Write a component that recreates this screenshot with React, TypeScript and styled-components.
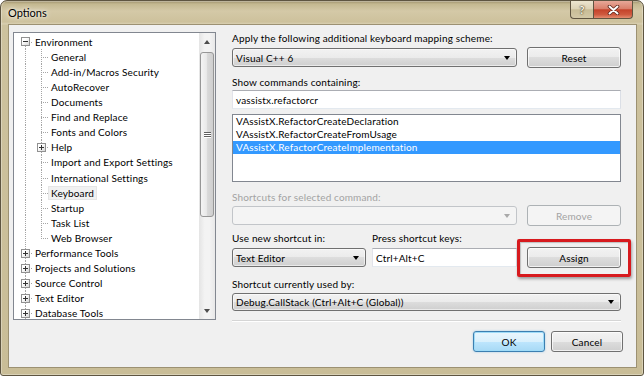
import React from 'react';
import styled, { createGlobalStyle, css } from 'styled-components';

const GlobalStyle = createGlobalStyle`
  html, body {
    margin: 0;
    padding: 0;
    background: #fff;
  }
  body {
    font-family: Lato, "Liberation Sans", sans-serif;
    font-size: 10px;
    letter-spacing: 0.15px;
    color: #000;
  }
  * {
    box-sizing: border-box;
  }
`;

const Window = styled.div`
  width: 644px;
  height: 376px;
  display: flex;
  flex-direction: column;
  padding: 0 6px 7px 7px;
  border: 1px solid #5e5541;
  border-radius: 7px 7px 3px 3px;
  background: linear-gradient(180deg, #9c8f6a 0, #c4b890 3px, #d4c9a7 10px, #cdc19c 21px, #d9d0b2 23px, #cdc29e 24px, #c9bd97 100%);
  box-shadow: inset 0 0 0 1px rgba(255, 255, 255, 0.3);
`;

const TitleBar = styled.div`
  height: 23px;
  display: flex;
  align-items: flex-start;
`;

const Title = styled.div`
  line-height: 24px;
  font-size: 11px;
  letter-spacing: 0;
  text-shadow: 0 0 6px #fff, 0 0 3px rgba(255, 255, 255, 0.8);
`;

const CaptionButtons = styled.div`
  margin-left: auto;
  margin-right: 4px;
  display: flex;
`;

const CaptionButton = styled.div<{ $close?: boolean }>`
  height: 18px;
  display: flex;
  align-items: center;
  justify-content: center;
  border: 1px solid #5f5440;
  border-top: none;
  ${p => p.$close ? css`
    width: 40px;
    border-radius: 0 0 4px 0;
    background: linear-gradient(180deg, #e7a898 0%, #d9806b 45%, #c4432b 52%, #cf5a3f 80%, #e48d70 100%);
  ` : css`
    width: 23px;
    border-right: none;
    border-radius: 0 0 0 4px;
    background: linear-gradient(180deg, #ece5cf 0%, #ddd3b6 45%, #c8bc96 52%, #d3c8a6 100%);
    color: #fbf6e4;
    font-weight: 700;
    font-size: 11px;
    text-shadow: 0 0 2px #3d3422, 0 0 1px #3d3422;
  `}
`;

const Client = styled.div`
  flex: 1;
  display: flex;
  flex-direction: column;
  background: #f0f0f0;
  border: 1px solid #9c9172;
  padding: 7px 0 0 4px;
`;

const MainRow = styled.div`
  height: 290px;
  margin-right: 15px;
  display: flex;
  gap: 16px;
`;

const Tree = styled.div`
  width: 203px;
  height: 288px;
  display: flex;
  border: 1px solid #828790;
  background: #fff;
`;

const TreeList = styled.div`
  flex: 1;
  padding: 1.2px 0 0 3px;
  overflow: hidden;
`;

const TreeRow = styled.div`
  height: 15.1px;
  display: flex;
  align-items: center;
  white-space: nowrap;
`;

const dotsV = 'repeating-linear-gradient(to bottom, #a5a5a5 0 1px, transparent 1px 2px)';
const dotsH = 'repeating-linear-gradient(to right, #a5a5a5 0 1px, transparent 1px 2px)';

const Guide = styled.div<{ $line?: boolean }>`
  width: 16px;
  align-self: stretch;
  position: relative;
  ${p => p.$line && css`
    &::before {
      content: '';
      position: absolute;
      left: 8px;
      top: 0;
      bottom: 0;
      width: 1px;
      background: ${dotsV};
    }
  `}
`;

const Branch = styled.div<{ $top: boolean; $bottom: boolean }>`
  width: 16px;
  align-self: stretch;
  position: relative;
  &::before {
    content: '';
    position: absolute;
    left: 8px;
    width: 1px;
    top: ${p => (p.$top ? '0' : '50%')};
    bottom: ${p => (p.$bottom ? '0' : '50%')};
    background: ${dotsV};
  }
  &::after {
    content: '';
    position: absolute;
    left: 8px;
    right: 0;
    top: 50%;
    height: 1px;
    background: ${dotsH};
  }
`;

const Expander = styled.span<{ $open: boolean }>`
  position: absolute;
  left: 4px;
  top: 50%;
  margin-top: -4.5px;
  width: 9px;
  height: 9px;
  border: 1px solid #919191;
  background: linear-gradient(135deg, #fff 35%, #d6d6d6);
  z-index: 1;
  &::before {
    content: '';
    position: absolute;
    left: 1px;
    width: 5px;
    top: 3px;
    height: 1px;
    background: #333;
  }
  ${p => !p.$open && css`
    &::after {
      content: '';
      position: absolute;
      left: 3px;
      width: 1px;
      top: 1px;
      height: 5px;
      background: #333;
    }
  `}
`;

const TreeText = styled.span<{ $selected?: boolean }>`
  padding: 0 2px;
  line-height: 12px;
  ${p => p.$selected && css`
    background: #f1f1f1;
    outline: 1px solid #e6e6e6;
  `}
`;

const ScrollBar = styled.div`
  width: 16px;
  display: flex;
  flex-direction: column;
  background: linear-gradient(90deg, #e4e4e4, #f3f3f3 35%, #f3f3f3 65%, #e8e8e8);
`;

const ScrollArrow = styled.div<{ $down?: boolean }>`
  height: 17px;
  display: flex;
  align-items: center;
  justify-content: center;
  &::before {
    content: '';
    border-left: 3.5px solid transparent;
    border-right: 3.5px solid transparent;
    ${p => p.$down ? css`border-top: 4px solid #4d4d4d;` : css`border-bottom: 4px solid #4d4d4d;`}
  }
`;

const ScrollTrack = styled.div`
  flex: 1;
  padding: 2px 1px 0 1px;
`;

const Thumb = styled.div`
  height: 165px;
  border: 1px solid #969696;
  border-radius: 3px;
  background: linear-gradient(90deg, #f4f4f4, #e9e9e9 45%, #d8d8d8 55%, #cfcfcf);
  display: flex;
  align-items: center;
  justify-content: center;
`;

const Grip = styled.div`
  width: 7px;
  height: 6px;
  background: repeating-linear-gradient(to bottom, #5f5f5f 0 1px, #fff 1px 2px);
`;

const Panel = styled.div`
  flex: 1;
  display: flex;
  flex-direction: column;
`;

const Label = styled.div<{ $mt?: number; $disabled?: boolean }>`
  height: 13px;
  line-height: 13px;
  margin-top: ${p => p.$mt ?? 0}px;
  color: ${p => (p.$disabled ? '#a3a3a3' : '#000')};
  white-space: nowrap;
`;

const Row = styled.div<{ $mt?: number }>`
  height: 21px;
  margin-top: ${p => p.$mt ?? 0}px;
  display: grid;
  grid-template-columns: 1fr 94px;
  column-gap: 10px;
  align-items: center;
`;

const Combo = styled.div<{ $disabled?: boolean; $mt?: number; $h?: number }>`
  height: ${p => p.$h ?? 19}px;
  margin-top: ${p => p.$mt ?? 0}px;
  display: flex;
  align-items: center;
  padding-left: 3px;
  border: 1px solid #707070;
  border-radius: 3px;
  background: linear-gradient(180deg, #f2f2f2 0%, #ebebeb 50%, #dddddd 50%, #cfcfcf 100%);
  box-shadow: inset 0 0 0 1px rgba(255, 255, 255, 0.55);
  white-space: nowrap;
  &::after {
    content: '';
    margin-left: auto;
    margin-right: 6px;
    border-left: 3.5px solid transparent;
    border-right: 3.5px solid transparent;
    border-top: 4px solid #000;
  }
  ${p => p.$disabled && css`
    border-color: #c2c5c9;
    background: #f4f4f4;
    box-shadow: none;
    &::after {
      border-top-color: #a9a9a9;
    }
  `}
`;

const TextBox = styled.div<{ $mt?: number }>`
  height: 19px;
  margin-top: ${p => p.$mt ?? 0}px;
  display: flex;
  align-items: center;
  padding-left: 3px;
  border: 1px solid;
  border-color: #abadb3 #dbdfe6 #e3e9ef #e2e3ea;
  background: #fff;
  white-space: nowrap;
`;

const ListBox = styled.div`
  height: 68px;
  margin-top: 5px;
  border: 1px solid #828790;
  background: #fff;
`;

const ListItem = styled.div<{ $selected?: boolean }>`
  height: 13px;
  line-height: 13px;
  padding-left: 3px;
  white-space: nowrap;
  ${p => p.$selected && css`
    background: #3399ff;
    color: #fff;
  `}
`;

const Button = styled.button<{ $variant?: 'default' | 'disabled'; $w?: number }>`
  width: ${p => p.$w ?? 94}px;
  height: 21px;
  padding: 0;
  font: inherit;
  letter-spacing: inherit;
  color: #000;
  border: 1px solid #707070;
  border-radius: 3px;
  background: linear-gradient(180deg, #f2f2f2 0%, #ebebeb 50%, #dddddd 50%, #cfcfcf 100%);
  box-shadow: inset 0 0 0 1px rgba(255, 255, 255, 0.7);
  ${p => p.$variant === 'default' && css`
    border-color: #3c7fb1;
    background: linear-gradient(180deg, #eaf6fd 0%, #d9f0fc 50%, #bee6fd 50%, #a7d9f5 100%);
    box-shadow: inset 0 0 0 1px #9fdcf8, 0 0 2px rgba(60, 160, 220, 0.5);
  `}
  ${p => p.$variant === 'disabled' && css`
    color: #a3a3a3;
    border-color: #adb2b5;
    background: #f4f4f4;
    box-shadow: none;
  `}
`;

const KeysGrid = styled.div`
  margin-top: 6px;
  display: grid;
  grid-template-columns: 134px 1fr 98px;
  grid-template-rows: 13px 21px;
  column-gap: 6px;
  row-gap: 2px;
  align-items: center;
`;

const AssignCell = styled.div`
  justify-self: end;
  position: relative;
  display: flex;
`;

const Highlight = styled.div`
  position: absolute;
  left: -10px;
  right: -10px;
  top: -8px;
  bottom: -9px;
  border: 3px solid #d71a1e;
  border-radius: 2px;
  box-shadow: 1px 2px 3px rgba(0, 0, 0, 0.35), inset 1px 1px 1px rgba(0, 0, 0, 0.2);
  pointer-events: none;
`;

const Separator = styled.div`
  margin-top: auto;
  height: 2px;
  border-top: 1px solid #d5d5d5;
  border-bottom: 1px solid #fff;
`;

const Footer = styled.div`
  margin-top: 9px;
  padding-right: 13px;
  display: flex;
  justify-content: flex-end;
  gap: 6px;
`;

type TreeItem = { label: string; level: number; exp?: '+' | '-'; last?: boolean; selected?: boolean };

const treeItems: TreeItem[] = [
  { label: 'Environment', level: 0, exp: '-' },
  { label: 'General', level: 1 },
  { label: 'Add-in/Macros Security', level: 1 },
  { label: 'AutoRecover', level: 1 },
  { label: 'Documents', level: 1 },
  { label: 'Find and Replace', level: 1 },
  { label: 'Fonts and Colors', level: 1 },
  { label: 'Help', level: 1, exp: '+' },
  { label: 'Import and Export Settings', level: 1 },
  { label: 'International Settings', level: 1 },
  { label: 'Keyboard', level: 1, selected: true },
  { label: 'Startup', level: 1 },
  { label: 'Task List', level: 1 },
  { label: 'Web Browser', level: 1, last: true },
  { label: 'Performance Tools', level: 0, exp: '+' },
  { label: 'Projects and Solutions', level: 0, exp: '+' },
  { label: 'Source Control', level: 0, exp: '+' },
  { label: 'Text Editor', level: 0, exp: '+' },
  { label: 'Database Tools', level: 0, exp: '+' },
];

function CloseGlyph() {
  return (
    <svg width="13" height="10" viewBox="0 0 13 10">
      <path d="M2.5 1.5 L10.5 8.5 M10.5 1.5 L2.5 8.5" stroke="#5a2418" strokeWidth="3.6" strokeLinecap="round" />
      <path d="M2.5 1.5 L10.5 8.5 M10.5 1.5 L2.5 8.5" stroke="#fff" strokeWidth="2" strokeLinecap="round" />
    </svg>
  );
}

function OptionsTree() {
  return (
    <Tree>
      <TreeList>
        {treeItems.map((item, i) => (
          <TreeRow key={item.label}>
            {item.level > 0 && <Guide $line />}
            <Branch $top={i > 0} $bottom={!item.last}>
              {item.exp && <Expander $open={item.exp === '-'} />}
            </Branch>
            <TreeText $selected={item.selected}>{item.label}</TreeText>
          </TreeRow>
        ))}
      </TreeList>
      <ScrollBar>
        <ScrollArrow />
        <ScrollTrack>
          <Thumb>
            <Grip />
          </Thumb>
        </ScrollTrack>
        <ScrollArrow $down />
      </ScrollBar>
    </Tree>
  );
}

export default function App() {
  return (
    <>
      <GlobalStyle />
      <Window>
        <TitleBar>
          <Title>Options</Title>
          <CaptionButtons>
            <CaptionButton>?</CaptionButton>
            <CaptionButton $close>
              <CloseGlyph />
            </CaptionButton>
          </CaptionButtons>
        </TitleBar>
        <Client>
          <MainRow>
            <OptionsTree />
            <Panel>
              <Label>Apply the following additional keyboard mapping scheme:</Label>
              <Row $mt={2}>
                <Combo>Visual C++ 6</Combo>
                <Button>Reset</Button>
              </Row>
              <Label $mt={8}>Show commands containing:</Label>
              <TextBox $mt={1}>vassistx.refactorcr</TextBox>
              <ListBox>
                <ListItem>VAssistX.RefactorCreateDeclaration</ListItem>
                <ListItem>VAssistX.RefactorCreateFromUsage</ListItem>
                <ListItem $selected>VAssistX.RefactorCreateImplementation</ListItem>
              </ListBox>
              <Label $mt={9} $disabled>Shortcuts for selected command:</Label>
              <Row $mt={1}>
                <Combo $disabled />
                <Button $variant="disabled">Remove</Button>
              </Row>
              <KeysGrid>
                <Label>Use new shortcut in:</Label>
                <Label>Press shortcut keys:</Label>
                <span />
                <Combo>Text Editor</Combo>
                <TextBox>Ctrl+Alt+C</TextBox>
                <AssignCell>
                  <Button>Assign</Button>
                  <Highlight />
                </AssignCell>
              </KeysGrid>
              <Label $mt={10}>Shortcut currently used by:</Label>
              <Combo $mt={2} $h={18}>Debug.CallStack (Ctrl+Alt+C (Global))</Combo>
              <Separator />
            </Panel>
          </MainRow>
          <Footer>
            <Button $variant="default" $w={72}>OK</Button>
            <Button $w={72}>Cancel</Button>
          </Footer>
        </Client>
      </Window>
    </>
  );
}
